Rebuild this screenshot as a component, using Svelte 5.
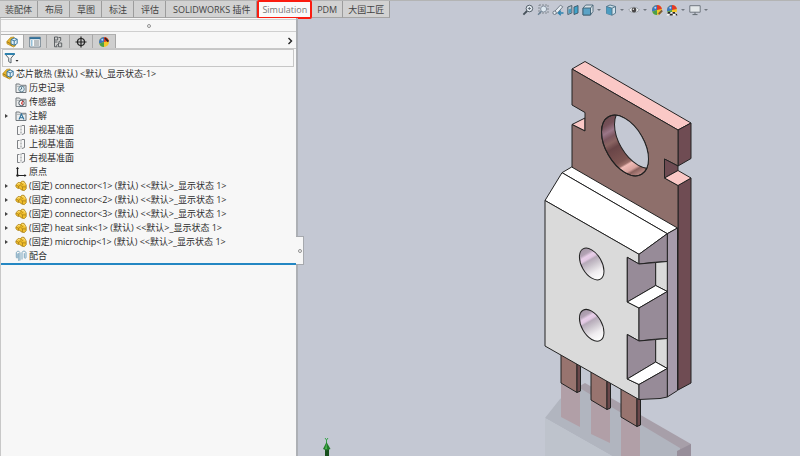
<script>
	let activeTab = $state('Simulation');
	let activePane = $state('tree');
	let filterText = $state('');

	const tabs = ['装配体', '布局', '草图', '标注', '评估', 'SOLIDWORKS 插件', 'Simulation', 'PDM', '大国工匠'];

	const panes = [
		{ id: 'tree', label: 'FeatureManager' },
		{ id: 'list', label: 'PropertyManager' },
		{ id: 'config', label: 'ConfigurationManager' },
		{ id: 'target', label: 'DimXpertManager' },
		{ id: 'ball', label: 'DisplayManager' }
	];

	const tools = [
		{ id: 'fit', label: 'Zoom to fit' },
		{ id: 'area', label: 'Zoom to area' },
		{ id: 'prev', label: 'Previous view' },
		{ id: 'section', label: 'Section view' },
		{ id: 'orient', label: 'View orientation', menu: true },
		{ id: 'cube', label: 'Display style', menu: true },
		{ id: 'eye', label: 'Hide or show items', menu: true },
		{ id: 'paint', label: 'Edit appearance' },
		{ id: 'scene', label: 'Apply scene', menu: true },
		{ id: 'screen', label: 'View settings', menu: true }
	];

	let items = $state([
		{ icon: 'history', text: '历史记录' },
		{ icon: 'sensor', text: '传感器' },
		{ icon: 'note', text: '注解', open: false },
		{ icon: 'plane', text: '前视基准面' },
		{ icon: 'plane', text: '上视基准面' },
		{ icon: 'plane', text: '右视基准面' },
		{ icon: 'origin', text: '原点' },
		{ icon: 'part', text: '(固定) connector<1> (默认) <<默认>_显示状态 1>', open: false },
		{ icon: 'part', text: '(固定) connector<2> (默认) <<默认>_显示状态 1>', open: false },
		{ icon: 'part', text: '(固定) connector<3> (默认) <<默认>_显示状态 1>', open: false },
		{ icon: 'part', text: '(固定) heat sink<1> (默认) <<默认>_显示状态 1>', open: false },
		{ icon: 'part', text: '(固定) microchip<1> (默认) <<默认>_显示状态 1>', open: false },
		{ icon: 'mate', text: '配合' }
	]);

	const pins = [
		{ x: 561, y: 383 },
		{ x: 591, y: 400 },
		{ x: 621, y: 417 }
	];
	const bores = [
		{ x: 591.7, y: 264 },
		{ x: 591.7, y: 325.3 }
	];
</script>

{#snippet ball()}
	<circle cx="6" cy="6" r="5" fill="#f4c928" />
	<path d="M6 6V1A5 5 0 0 0 1.3 7.7z" fill="#3b78bf" />
	<path d="M6 6 1.3 7.7A5 5 0 0 0 6 11z" fill="#4aa04a" />
	<path d="M6 6V1a5 5 0 0 1 4.9 4z" fill="#e03a2c" />
	<circle cx="4.3" cy="3.8" r="1" fill="#fff" opacity=".7" />
{/snippet}

{#snippet folder()}
	<path d="M1 10.5V2h3.5l1 1.3H11v7.2z" fill="#eceeef" stroke="#70767b" />
	<path d="M1.5 4.3h9" stroke="#a5aaad" />
{/snippet}

{#snippet icon(id)}
	<svg class="icon" viewBox="0 0 12 12" fill="none" aria-hidden="true">
		{#if id === 'tree'}
			<path d="M.8 5.6 4.6 1.4 8 1l1.5 8.8-2 1.2L1 7.8z" fill="#e9b52d" stroke="#b48a1c" stroke-width=".7" />
			<path d="m1 5.8 3.4 1.8 1.2 2.4" stroke="#8d6a10" stroke-width=".8" />
			<path d="M5 3.5 8.2 2l3 1.3v4.2L8.2 9.3 5 7.8z" fill="#e3f0f6" stroke="#2b6e99" stroke-width=".9" />
			<path d="m5 3.5 3.2 1.4 3-1.6M8.2 4.9v4.4" stroke="#2b6e99" stroke-width=".9" />
		{:else if id === 'list'}
			<path d="M.7 1.2h10.6v9.8H.7z" fill="#fafafa" stroke="#5a6f7e" stroke-width=".8" />
			<path d="M.7 2.2h10.6" stroke="#2f6e98" stroke-width="2" />
			<path d="M2 5h1.5M2 7h1.5M2 9h1.5" stroke="#2f86b8" stroke-width="1.2" />
			<path d="M5 5h5M5 7h5M5 9h5" stroke="#7d868c" />
		{:else if id === 'config'}
			<path d="M2.5 1h3.2v3H2.5zM2.5 1v9.8h3M6.5 7h3.2v3.8H6.5zM2.5 6h3" stroke="#54585b" stroke-width=".9" />
			<path d="M6.5 1.5h2.2v3L6.3 6.2M4 10.8 5.6 8" stroke="#54585b" stroke-width=".9" />
		{:else if id === 'target'}
			<circle cx="6" cy="6" r="3.5" stroke="#222" stroke-width="1.2" />
			<path d="M6 .5v11M.5 6h11" stroke="#222" stroke-width="1.2" />
		{:else if id === 'ball'}
			{@render ball()}
			<path d="m7 2 3.4 3.6" stroke="#2e2424" stroke-width="1.8" />
		{:else if id === 'paint'}
			{@render ball()}
			<path d="m11.2 6.5-4 4" stroke="#7b5a3a" stroke-width="1.8" />
			<path d="m7.4 9.6-1.6 1.8 2.4-.9z" fill="#e8c15a" />
		{:else if id === 'history'}
			{@render folder()}
			<circle cx="6.5" cy="7" r="2.8" fill="#e1edf3" stroke="#4b7388" stroke-width=".8" />
			<path d="M6.5 5.3V7L5 8.2" stroke="#284e62" stroke-width=".8" />
		{:else if id === 'sensor'}
			{@render folder()}
			<circle cx="6.5" cy="7" r="2.7" fill="#fff" stroke="#3d4b55" stroke-width=".9" />
			<path d="m6.5 7 1.7-2.2M6.3 7l1.5 1.7" stroke="#cf3b36" stroke-width="1.2" />
		{:else if id === 'note'}
			{@render folder()}
			<path d="M4 9.5 6.4 4 9 9.5M5 7.8h3" stroke="#2e719b" stroke-width="1.1" />
		{:else if id === 'plane'}
			<path d="M4.5 2.5h-2v8h2.2M6.8 1.5h2.7v8L7 10.5" stroke="#6f7377" stroke-width=".9" />
			<path d="M6 1.5V11" stroke="#6f7377" stroke-width=".8" stroke-dasharray="2 1" />
		{:else if id === 'origin'}
			<path d="M2.5 1.5v8h8" stroke="#222" stroke-width="1.2" />
			<path d="m1 3 1.5-2L4 3M9.5 8l2 1.5-2 1.5" fill="#222" />
			<circle cx="2.5" cy="9.5" r="1.2" fill="#222" />
		{:else if id === 'part'}
			<path d="M.9 5 3 2.6l2.4.2 1.5-1.6 2.2.2L11.2 5v3.7L9.4 10.6 7 10.2 4.6 8.4 2.4 8.2 1 6.8z" fill="#f2bf2c" stroke="#a87d14" stroke-width=".8" />
			<path d="m1.2 5 2.4 1.4L5.4 5l2 1.8 3.4.2M3.6 6.4v1.8M7.4 6.8v3.2M5.4 2.8l2.4 2" stroke="#8e6a12" stroke-width=".6" />
			<path d="m2 4.7 1.3-1.3 1.6.3M7 2.3l1.6.2 1.6 2.3" stroke="#ffeb9a" stroke-width=".8" />
		{:else if id === 'mate'}
			<path d="M5 2.8C4.7.7 1.4.8 1.3 3v4.2c0 1.2 1.5 1.2 1.5 0V3.5M5 3v7.500M7 9.500V2.700c.2-2.200 4-2 4 .3v4.300c0 1.300-1.700 1.300-1.700 0V3.200M3.800 3v8" stroke="#7ba6be" />
		{:else if id === 'fit'}
			<circle cx="7.4" cy="4.5" r="3.300" fill="#e4ebf1" stroke="#56616b" />
			<path d="M5 7 1.400 10.700" stroke="#46515a" stroke-width="1.800" />
			<path d="M5.800 4.500H9M7.400 3v3" stroke="#56616b" stroke-width=".8" />
		{:else if id === 'area'}
			<path d="M2 1h9v8H2z" stroke="#747b84" stroke-width=".8" stroke-dasharray="2 1" />
			<circle cx="6.600" cy="5" r="3" fill="#dde8f0" stroke="#8792a0" />
			<path d="m4.400 7.300-3.300 3.500" stroke="#6a8193" stroke-width="1.500" />
		{:else if id === 'prev'}
			<path d="M1.600 8.500 8.400 1.200l2.400 1.600-5.600 6.500z" fill="#e6edf2" stroke="#6a7480" stroke-width=".9" />
			<circle cx="2.600" cy="8.800" r="1.700" fill="#e6edf2" stroke="#6a7480" stroke-width=".9" />
			<path d="M11.500 9H7M8.800 6.800 6.400 9l2.400 2.200" stroke="#2d83b0" stroke-width="1.400" />
		{:else if id === 'section'}
			<path d="m.8 3 4-1.500v7.500l-4 1.500z" fill="#b7c6cf" stroke="#405765" stroke-width=".9" />
			<path d="m7 3 4-1.500V9l-4 1.500z" fill="#3fa3cb" stroke="#405765" stroke-width=".9" />
			<path d="m1.500 5.500 2.700-1v4l-2.700 1z" fill="#4b9cc1" />
		{:else if id === 'orient'}
			<path d="m1 4 2.700-3H11v6.500L8.500 11H1z" fill="#d7e0e6" stroke="#4b6678" stroke-width=".9" />
			<path d="M1 4h7.500v7H1z" fill="#5ba3c6" stroke="#3d6073" stroke-width=".9" />
			<path d="M8.500 4 11 1" stroke="#4b6678" stroke-width=".9" />
		{:else if id === 'cube'}
			<path d="m1.500 2.500 3.500-1.500L10.500 2.500v6.700l-3.500 2-5.500-1.800z" fill="#cfe2ec" stroke="#4d6f84" stroke-width=".9" />
			<path d="M1.500 2.500 7 4.200v7l-5.500-1.800z" fill="#4b9cc1" />
			<path d="M1.500 2.500 7 4.200l3.500-1.700M7 4.200v7" stroke="#4d6f84" stroke-width=".9" />
		{:else if id === 'eye'}
			<path d="M.7 6C3 2.600 8.500 2.200 11.300 6 8 9.500 3.600 9.300.7 6z" fill="#edf0f2" stroke="#8a9098" stroke-width=".8" />
			<circle cx="6" cy="6" r="2.400" fill="#484647" />
			<circle cx="5.300" cy="5.200" r=".7" fill="#fff" />
		{:else if id === 'scene'}
			{@render ball()}
			<path d="M2 8h8l1.500 3.500H.5z" fill="#f4f4f4" />
			<path d="M2 8h2.500L4 9.700H1.300zM6.500 8H9l.6 1.700H6.700zM4 9.700h2.700v1.800H3.500zM9.600 9.700h1.200l.7 1.800H9.800z" fill="#272727" />
		{:else if id === 'screen'}
			<path d="M.8 1.700h10.400v6.500H.8z" fill="#e3e7e9" stroke="#707780" />
			<path d="M6 8.400v2M3.500 10.600h5" stroke="#626a71" />
		{/if}
	</svg>
{/snippet}

<div class="app">
	<header>
		<nav class="tabs">
			{#each tabs as tab}
				<button class="tab" class:active={activeTab === tab} onclick={() => (activeTab = tab)}>{tab}</button>
			{/each}
		</nav>
		<div class="tools">
			{#each tools as tool}
				<button class="tool" class:menu={tool.menu} aria-label={tool.label}>
					{@render icon(tool.id)}
				</button>
			{/each}
		</div>
	</header>

	<main>
		<aside>
			<div class="grip"><i class="dot"></i></div>
			<div class="panes">
				{#each panes as pane}
					<button class="pane" class:active={activePane === pane.id} aria-label={pane.label} onclick={() => (activePane = pane.id)}>
						{@render icon(pane.id)}
					</button>
				{/each}
				<button class="more" aria-label="More panes">
					<svg viewBox="0 0 6 8" fill="none"><path d="m1.5 1 3 3-3 3" stroke="#222" stroke-width="1.4" /></svg>
				</button>
			</div>
			<label class="filter">
				<svg viewBox="0 0 16 12" fill="none" aria-hidden="true">
					<path d="M1 2h9.5L7 6.2V11L4.700 9.600V6.200z" fill="#f3f5f6" stroke="#5b656c" />
					<path d="M.8 2h10" stroke="#2d81ad" stroke-width="2" />
					<path d="M11.500 8h3L13 9.800z" fill="#222" />
				</svg>
				<input type="text" aria-label="Filter" bind:value={filterText} />
			</label>
			<div class="root">
				{@render icon('tree')}
				<span>芯片散热 (默认) &lt;默认_显示状态-1&gt;</span>
			</div>
			<ul>
				{#each items as item}
					<li>
						{#if item.open !== undefined}
							<button class="expand" aria-label="Expand {item.text}" aria-expanded={item.open} onclick={() => (item.open = !item.open)}></button>
						{:else}
							<span class="expand-space"></span>
						{/if}
						{@render icon(item.icon)}
						<span>{item.text}</span>
					</li>
				{/each}
			</ul>
			<div class="rollback"></div>
			<button class="splitter" aria-label="Collapse panel"><i class="dot"></i></button>
		</aside>

		<svg class="model" viewBox="298 18 502 438" preserveAspectRatio="xMidYMid meet" role="img" aria-label="microchip assembly">
			<defs>
				<!-- run along the major axis of the rotated ellipses -->
				<linearGradient id="wall" x1="0" y1="0" x2="1" y2="0">
					<stop offset="0" stop-color="#6d4a4e" />
					<stop offset=".1" stop-color="#765159" />
					<stop offset=".2" stop-color="#9b7789" />
					<stop offset=".28" stop-color="#7c5760" />
					<stop offset=".36" stop-color="#8a6462" />
					<stop offset=".45" stop-color="#694547" />
					<stop offset=".68" stop-color="#7d5552" />
					<stop offset=".74" stop-color="#9a6d68" />
					<stop offset=".77" stop-color="#f0bcb7" />
					<stop offset=".86" stop-color="#d9a39e" />
					<stop offset=".9" stop-color="#8b625e" />
					<stop offset="1" stop-color="#c08f8a" />
				</linearGradient>
				<linearGradient id="bore" x1="0" y1="0" x2="1" y2="0">
					<stop offset="0" stop-color="#a497a6" />
					<stop offset=".16" stop-color="#b3a3b5" />
					<stop offset=".24" stop-color="#e8cfe9" />
					<stop offset=".32" stop-color="#e2c8e3" />
					<stop offset=".38" stop-color="#b6aab9" />
					<stop offset=".52" stop-color="#c9c2cb" />
					<stop offset=".75" stop-color="#efecef" />
					<stop offset="1" stop-color="#fff" />
				</linearGradient>
				<clipPath id="hole"><ellipse rx="33.2" ry="19.2" transform="translate(625 145.5) rotate(60)" /></clipPath>
			</defs>

			<!-- floor reflection -->
			<g class="reflection">
				<path d="M578 387 585 383 691 444V456H652z" fill="#a79fa9" />
				<path d="M545 418 560 399 578 387 680 448V456H612z" fill="#b1b5bf" />
				<path d="M545 418 612 456H545z" fill="#bec3cc" />
				<path d="m677 451 14-7v12h-14z" fill="#978e9a" />
				<path d="M561 383 577 392.5 580 391V427L561 417zM591 400 607 409.5 610 408V443L591 434zM621 417 637 426.5 640 425V456H621z" fill="#b19fa7" />
			</g>

			<g class="edges">
				{#each pins as pin}
					<path d="M{pin.x} {pin.y - 36}v36l16 9.5V{pin.y - 26}z" fill="#98746f" />
					<path d="M{pin.x + 16} {pin.y - 27}v36.5l3.5-1.5v-34z" fill="#6c484b" />
				{/each}

				<!-- heat sink plate -->
				<path d="M572 69 585 61.5 691 123 678 130z" fill="#fac8c6" />
				<path d="M678 130 691 123V158.5L678 166z" fill="#6f4c53" />
				<path d="M678 185.5 691 178V383L678 390z" fill="#6f4c53" />
				<path d="M585 118 572 124.5 585 131z" fill="#fac8c6" />
				<path d="M572 69 678 130V166L664.5 159V178L678 185.5V240L572 175V124.5L585 131V112.5L572 105z" fill="#8e6f6b" />
				<path d="M664.5 159 678 166V170.5L664.5 178z" fill="#6f4c53" />
				<path d="M664.5 178 678 170.5 691 178 678 185.5z" fill="#fac8c6" />
				<ellipse rx="33.2" ry="19.2" transform="translate(625 145.5) rotate(60)" fill="url(#wall)" />
				<g clip-path="url(#hole)">
					<ellipse rx="33.2" ry="19.2" transform="translate(638 138) rotate(60)" fill="#c4c8d3" />
				</g>
				<ellipse rx="33.2" ry="19.2" transform="translate(625 145.5) rotate(60)" />

				<!-- package body -->
				<path d="M562 172.7 571.7 167 677.5 228 667.3 233.7z" fill="#fff" />
				<path d="M545 200.5 562 172.7 667.3 233.7 639 254.3z" fill="#fff" />
				<path d="M667.3 233.7 677.5 228V390.5L667.3 397z" fill="#a69bab" />
				<path d="M545 200.5 639 254.3V264L627.3 257.3V302L639 308V341L627.3 334.5V379L639 384.5V399.5L545 346z" fill="#dadada" />
				<path d="M639 254.3 667.3 233.7V261.5Q653 262 639 264z" fill="#978b98" />
				<path d="M627.3 257.3 639 264 655.7 262.5V285.5L627.3 302z" fill="#978b98" />
				<path d="M655.7 262.5 667.3 261.5V291.5L655.7 285.5z" fill="#dadada" />
				<path d="M627.3 302 655.7 285.5 667.3 291.5 639 308z" fill="#fff" />
				<path d="M639 308 667.3 291.5V338.5Q653 339 639 341z" fill="#978b98" />
				<path d="M627.3 334.5 639 341 655.7 339.5V362L627.3 379z" fill="#978b98" />
				<path d="M655.7 339.5 667.3 338.5V368.5L655.7 362z" fill="#dadada" />
				<path d="M627.3 379 655.7 362 667.3 368.5 639 384.5z" fill="#fff" />
				<path d="M639 384.5 667.3 368.5V397L660 398.5 639 399.5z" fill="#978b98" />

				{#each bores as bore}
					<ellipse rx="17.4" ry="10" transform="translate({bore.x} {bore.y}) rotate(60)" fill="url(#bore)" />
				{/each}
			</g>

			<!-- triad, y axis -->
			<path d="m325 438 1.5 2 1.5-2M326.5 440v3" fill="none" stroke="#36a34a" />
			<path d="M325 448h4v8h-4z" fill="#164f1c" />
			<path d="m326.5 442 4 7-4 1.5-3.5-1.5z" fill="#247b2c" />
			<path d="m326.5 443-1.5 6h2z" fill="#4abb51" />
		</svg>
	</main>
</div>

<style>
	:global(body) {
		margin: 0;
		background: #c4c8d3;
	}
	.app {
		display: flex;
		flex-direction: column;
		min-height: 100vh;
		font-family: "Open Sans", "Noto Sans CJK SC", sans-serif;
		font-size: 9px;
		line-height: 14px;
		color: #2c2c2c;
	}
	button {
		font: inherit;
		color: inherit;
		padding: 0;
		border: 0;
		background: none;
		cursor: pointer;
	}
	.icon {
		display: block;
		width: 12px;
		height: 12px;
		flex: none;
	}
	header {
		display: flex;
		justify-content: space-between;
		height: 18px;
		border-top: 1px solid #b3b4b4;
		box-sizing: border-box;
	}
	.tabs {
		display: flex;
	}
	.tab {
		padding: 0 6px 0 7px;
		background: #d2d2d2;
		border-right: 1px solid #9c9c9c;
		border-bottom: 1px solid #a5a5a5;
		color: #444;
		white-space: nowrap;
		line-height: 15px;
	}
	.tab:first-child {
		padding: 0 5px;
	}
	.tab.active {
		position: relative;
		background: #fafafa;
		color: #777;
		border: 2px solid #fb1c10;
		border-radius: 2px;
		padding: 0 3px;
		margin: -1px 0;
	}
	.tab.active ~ .tab {
		padding: 0 5px;
	}
	.tools {
		display: flex;
		align-items: center;
		gap: 3px;
		padding-right: 91px;
	}
	.tool.menu {
		display: flex;
		align-items: center;
		gap: 3px;
		padding-right: 1px;
	}
	.tool.menu::after {
		content: "";
		border: 2px solid transparent;
		border-top-color: #717780;
		border-bottom: 0;
	}
	main {
		display: flex;
		flex: 1;
	}
	aside {
		position: relative;
		flex: 0 0 37.25%;
		box-sizing: border-box;
		background: #f7f7f7;
		border-right: 2px solid #adb0b5;
		border-left: 1px solid #c8c8c8;
	}
	.dot {
		display: block;
		width: 2px;
		height: 2px;
		border: 1px solid #929292;
		border-radius: 50%;
	}
	.grip {
		display: flex;
		align-items: center;
		justify-content: center;
		height: 13px;
		margin-top: 1px;
		border-top: 1px solid #cfcfcf;
		border-bottom: 1px solid #cfcfcf;
		box-sizing: border-box;
	}
	.panes {
		display: flex;
		height: 17px;
		padding-top: 2px;
		box-sizing: border-box;
		border-bottom: 1px solid #c8c8c8;
	}
	.pane {
		display: flex;
		align-items: center;
		justify-content: center;
		width: 23px;
		background: #cfcfcf;
		border-top: 1px solid #b0b0b0;
		border-right: 1px solid #a8a8a8;
	}
	.pane.active {
		background: #f9f9f9;
	}
	.more {
		margin-left: auto;
		padding: 0 3px;
	}
	.more svg {
		display: block;
		width: 6px;
		height: 8px;
	}
	.filter {
		display: flex;
		align-items: center;
		height: 18px;
		margin: 0 2px 0 1px;
		padding-left: 1px;
		box-sizing: border-box;
		border: 1px solid #c6c6c6;
	}
	.filter svg {
		width: 16px;
		height: 12px;
	}
	.filter input {
		flex: 1;
		min-width: 0;
		font: inherit;
		padding: 0 4px;
		border: 0;
		outline: 0;
		background: none;
	}
	.root, li {
		display: flex;
		align-items: center;
		height: 14px;
		white-space: nowrap;
	}
	.root {
		gap: 2px;
		padding-left: 1px;
	}
	ul {
		margin: 0;
		padding: 0;
		list-style: none;
	}
	li {
		gap: 2px;
	}
	.expand, .expand-space {
		width: 12px;
		height: 12px;
		flex: none;
	}
	.expand::before {
		content: "";
		display: block;
		width: 0;
		margin-left: 4px;
		border: 2px solid transparent;
		border-left: 3px solid #444;
		border-right: 0;
	}
	.expand[aria-expanded="true"]::before {
		transform: rotate(90deg);
	}
	.rollback {
		height: 2px;
		background: #2487c3;
	}
	.splitter {
		position: absolute;
		top: 218px;
		left: 100%;
		display: flex;
		align-items: center;
		justify-content: center;
		width: 8px;
		height: 29px;
		background: #f7f7f7;
		border: 1px solid #a6a9ae;
		border-left: 0;
	}
	.model {
		flex: 1;
		min-width: 0;
		display: block;
	}
	.edges {
		fill: none;
		stroke: #222;
		stroke-width: 1;
		stroke-linejoin: round;
	}
</style>
